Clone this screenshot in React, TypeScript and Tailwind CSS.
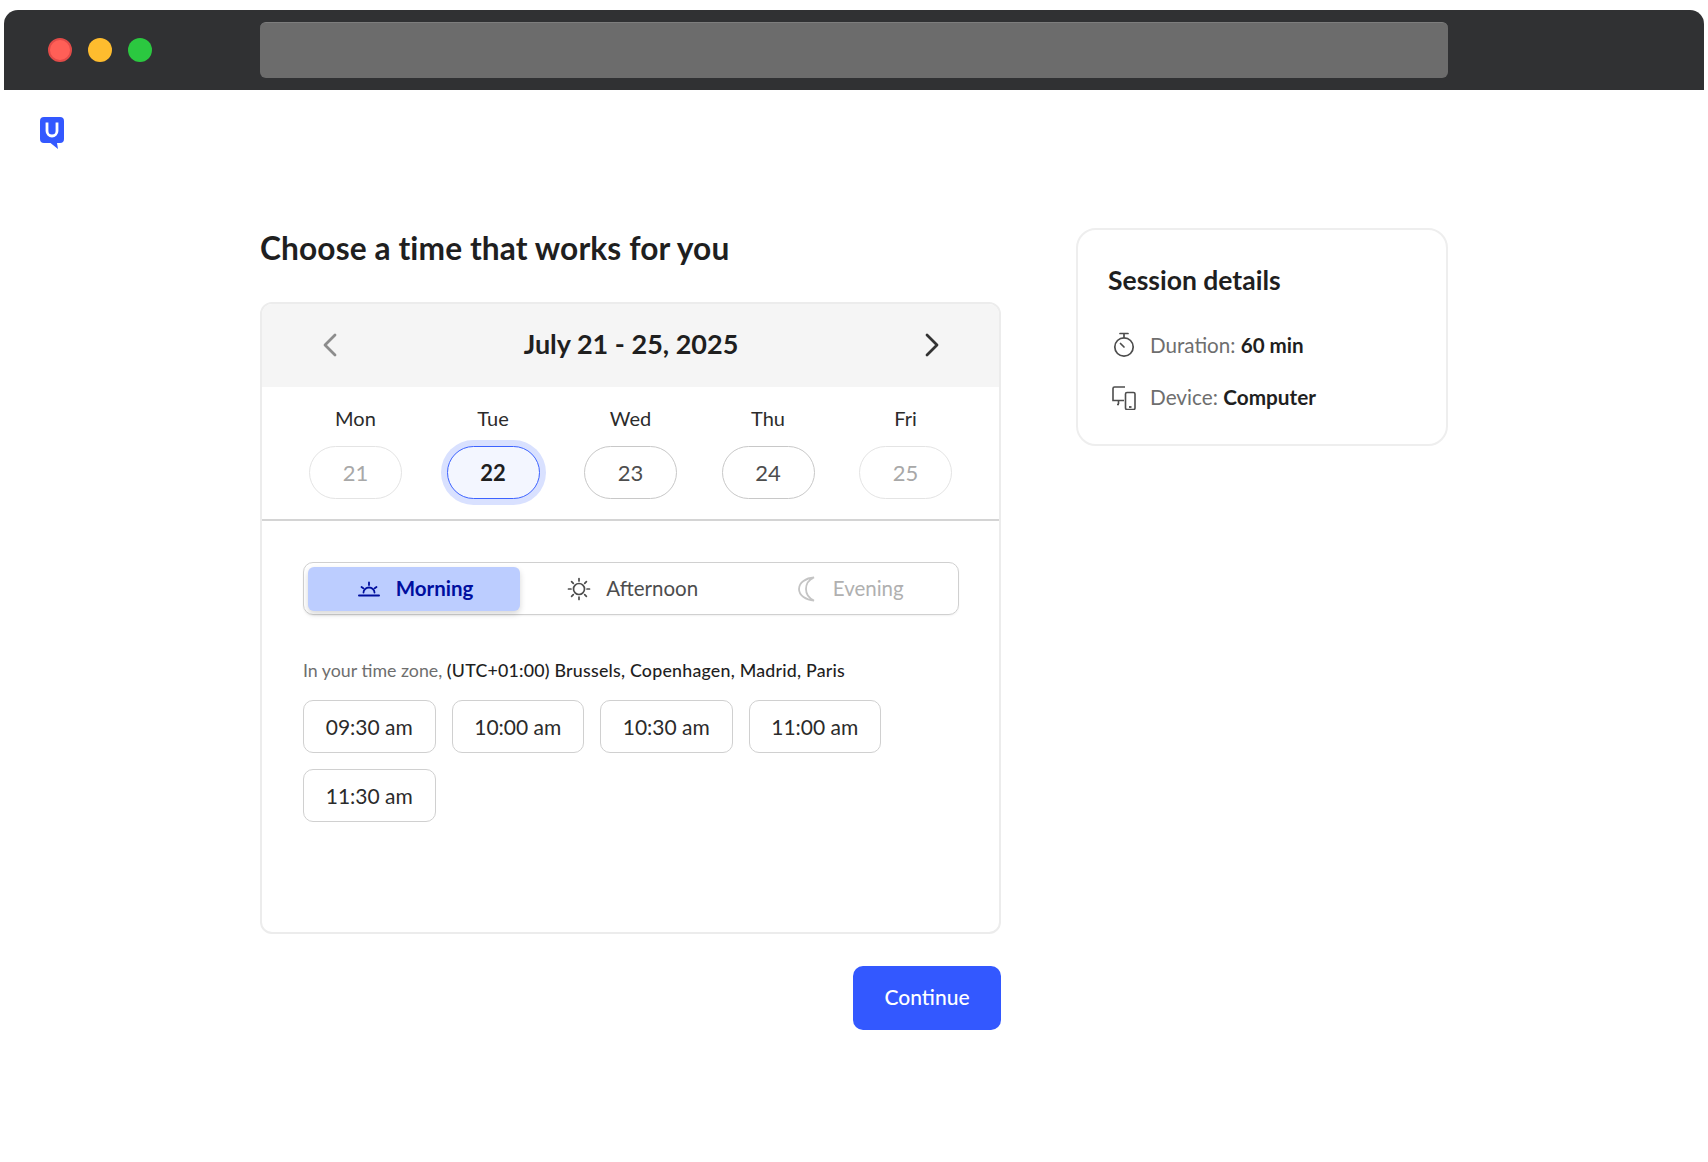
const days = [
  { d: "Mon", n: "21", state: "off" },
  { d: "Tue", n: "22", state: "sel" },
  { d: "Wed", n: "23", state: "on" },
  { d: "Thu", n: "24", state: "on" },
  { d: "Fri", n: "25", state: "off" },
];
const times = ["09:30 am", "10:00 am", "10:30 am", "11:00 am", "11:30 am"];

function Logo() {
  return (
    <svg width="24" height="32" viewBox="0 0 24 32" className="block">
      <path d="M4 0h16a4 4 0 0 1 4 4v18a4 4 0 0 1-4 4h-3l1 6-7.500-6H4a4 4 0 0 1-4-4V4a4 4 0 0 1 4-4z" fill="#3358ff" />
      <path d="M7 5.500v8.500a5 5 0 0 0 10 0V5.500" fill="none" stroke="#fff" strokeWidth="2.800" />
    </svg>
  );
}
function Sunrise() {
  return (
    <svg width="22" height="16" viewBox="0 0 22 16" fill="none" stroke="#000f9f" strokeWidth="1.800" strokeLinecap="round">
      <path d="M1 14.500h20" strokeWidth="2" />
      <path d="M5.500 11.500a5.500 5 0 0 1 11 0" />
      <path d="M11 1.500v2.500M3.500 6l1.800 1.300M18.500 6l-1.800 1.300" />
    </svg>
  );
}
function Sun() {
  return (
    <svg width="24" height="24" viewBox="0 0 24 24" fill="none" stroke="#4d4d4d" strokeWidth="1.700" strokeLinecap="round">
      <circle cx="12" cy="12" r="5.500" />
      <path d="M12 1.500v2.500M12 20v2.500M1.500 12H4M20 12h2.500M4.600 4.600l1.700 1.700M17.700 17.700l1.700 1.700M4.600 19.400l1.700-1.700M17.700 6.300l1.700-1.700" />
    </svg>
  );
}
function Moon() {
  return (
    <svg width="20" height="26" viewBox="0 0 20 26" fill="none" stroke="#c4c4c4" strokeWidth="1.800">
      <path d="M17 1.500C9 2 2 6.500 2 13s7 11 15 11.500c-4.500-2-8-6-8-11.500S12.500 3.500 17 1.500z" />
    </svg>
  );
}
function Timer() {
  return (
    <svg width="22" height="26" viewBox="0 0 22 26" fill="none" stroke="#4d4d4d" strokeWidth="1.700" strokeLinecap="round">
      <circle cx="11" cy="15" r="9.200" />
      <path d="M7 1.500h8M11 1.500v4M7.500 11.500l3.500 3.500" />
    </svg>
  );
}
function Devices() {
  return (
    <svg width="24" height="24" viewBox="0 0 24 24" fill="none" stroke="#4d4d4d" strokeWidth="1.600">
      <path d="M13 1H2.500a1.500 1.500 0 0 0-1.500 1.500V14.500H12" />
      <path d="M6.500 15v3M5 18.500h2" />
      <rect x="13.500" y="6.500" width="9.500" height="17" rx="1.500" />
      <path d="M17 21h2.500" strokeWidth="1.800" />
    </svg>
  );
}

export default function App() {
  return (
    <div className="min-h-[1162px] bg-white pt-[10px] font-['Lato','Liberation_Sans',sans-serif] text-[#1f1f1f]">
      <header className="mx-[4px] flex h-[80px] items-center rounded-t-[14px] bg-[#303133]">
        <div className="ml-[44px] flex gap-[16px]">
          <span className="h-[24px] w-[24px] rounded-full border-2 border-[#e24b48] bg-[#ff5f57]" />
          <span className="h-[24px] w-[24px] rounded-full bg-[#febc2e]" />
          <span className="h-[24px] w-[24px] rounded-full bg-[#2bc840]" />
        </div>
        <div className="ml-[108px] h-[56px] w-[1188px] rounded-[6px] border-t border-[#7d7d7d] bg-[#6c6c6c]" />
      </header>

      <div className="ml-[40px] mt-[27px] h-[32px]">
        <Logo />
      </div>

      <main className="mx-auto mt-[79px] flex w-[1188px] items-start justify-between">
        <section className="w-[741px]">
          <h1 className="text-[31.700px] font-bold leading-[40px] tracking-[0.1px]">Choose a time that works for you</h1>

          <div className="mt-[34px] h-[632px] overflow-hidden rounded-[12px] border-2 border-[#ececec]">
            <div className="flex h-[83px] items-center justify-between bg-[#f5f5f5] pb-[2px] pl-[60px] pr-[59px]">
              <svg width="16" height="24" viewBox="0 0 16 24" fill="none" stroke="#8c8c8c" strokeWidth="2.800" strokeLinecap="round" strokeLinejoin="round">
                <path d="M13 2 3 12l10 10" />
              </svg>
              <span className="text-[27px] font-bold">July 21 - 25, 2025</span>
              <svg width="16" height="24" viewBox="0 0 16 24" fill="none" stroke="#333333" strokeWidth="2.800" strokeLinecap="round" strokeLinejoin="round">
                <path d="M3 2l10 10L3 22" />
              </svg>
            </div>

            <div className="flex h-[134px] justify-between border-b-2 border-[#d4d4d4] px-[47px] pt-[17px]">
              {days.map((x) => (
                <div key={x.d} className="flex w-[93px] flex-col items-center">
                  <span className="text-[20px] leading-[28px] text-[#2b2b2b]">{x.d}</span>
                  <span
                    className={
                      x.state === "sel"
                        ? "mt-[14px] flex h-[53px] w-[93px] items-center justify-center rounded-full border-[1.500px] border-[#3d63ff] bg-[#f3f6ff] text-[22px] font-bold shadow-[0_0_0_6px_#d9e1ff]"
                        : x.state === "on"
                          ? "mt-[14px] flex h-[53px] w-[93px] items-center justify-center rounded-full border-[1.500px] border-[#c8c8c8] text-[22px] text-[#4d4d4d]"
                          : "mt-[14px] flex h-[53px] w-[93px] items-center justify-center rounded-full border-[1.500px] border-[#e4e4e4] text-[22px] text-[#a8a8a8]"
                    }
                  >
                    {x.n}
                  </span>
                </div>
              ))}
            </div>

            <div className="px-[41px] pt-[41px]">
              <div className="grid h-[53px] w-[656px] grid-cols-[212px_1fr_1fr] rounded-[10px] border-[1.500px] border-[#d0d0d0] p-[3.500px] shadow-[0_1px_2px_rgba(0,0,0,0.06)]">
                <div className="flex items-center justify-center gap-[16px] rounded-[6px] bg-[#bccdff] pl-[4px] text-[20.500px] font-bold text-[#000f9f] shadow-[0_3px_6px_rgba(0,0,0,0.16)]">
                  <Sunrise />
                  Morning
                </div>
                <div className="flex items-center justify-center gap-[15px] pl-[9px] text-[20.500px] text-[#4d4d4d]">
                  <Sun />
                  Afternoon
                </div>
                <div className="flex items-center justify-center gap-[16px] pl-[9px] text-[20.500px] text-[#b0b0b0]">
                  <Moon />
                  Evening
                </div>
              </div>

              <p className="mt-[42px] text-[17.800px] leading-[26px] text-[#6e6e6e]">
                In your time zone, <span className="font-medium tracking-[0.22px] text-[#1f1f1f]">(UTC+01:00) Brussels, Copenhagen, Madrid, Paris</span>
              </p>

              <div className="mt-[17px] flex w-[600px] flex-wrap gap-x-[16px] gap-y-[16px]">
                {times.map((t) => (
                  <button key={t} className="flex h-[53px] w-[132.500px] items-center justify-center rounded-[10px] border-[1.500px] border-[#d0d0d0] text-[21px] text-[#2b2b2b]">
                    {t}
                  </button>
                ))}
              </div>
            </div>
          </div>

          <div className="mt-[32px] flex justify-end">
            <button className="h-[64px] w-[148px] rounded-[10px] bg-[#3358ff] pb-[2px] text-[21px] font-medium text-white">Continue</button>
          </div>
        </section>

        <aside className="h-[218px] w-[372px] rounded-[20px] border-2 border-[#eeeeee] px-[30px] pt-[33px]">
          <h2 className="text-[26.500px] font-bold leading-[34px]">Session details</h2>
          <div className="mt-[30px] flex h-[36px] items-center gap-[15px] pl-[5px] text-[20.600px]">
            <Timer />
            <span className="text-[#6e6e6e]">
              Duration: <b className="font-bold text-[#1f1f1f]">60 min</b>
            </span>
          </div>
          <div className="mt-[17px] flex h-[36px] items-center gap-[14px] pl-[4px] text-[20.750px]">
            <Devices />
            <span className="text-[#6e6e6e]">
              Device: <b className="font-bold text-[#1f1f1f]">Computer</b>
            </span>
          </div>
        </aside>
      </main>
    </div>
  );
}
